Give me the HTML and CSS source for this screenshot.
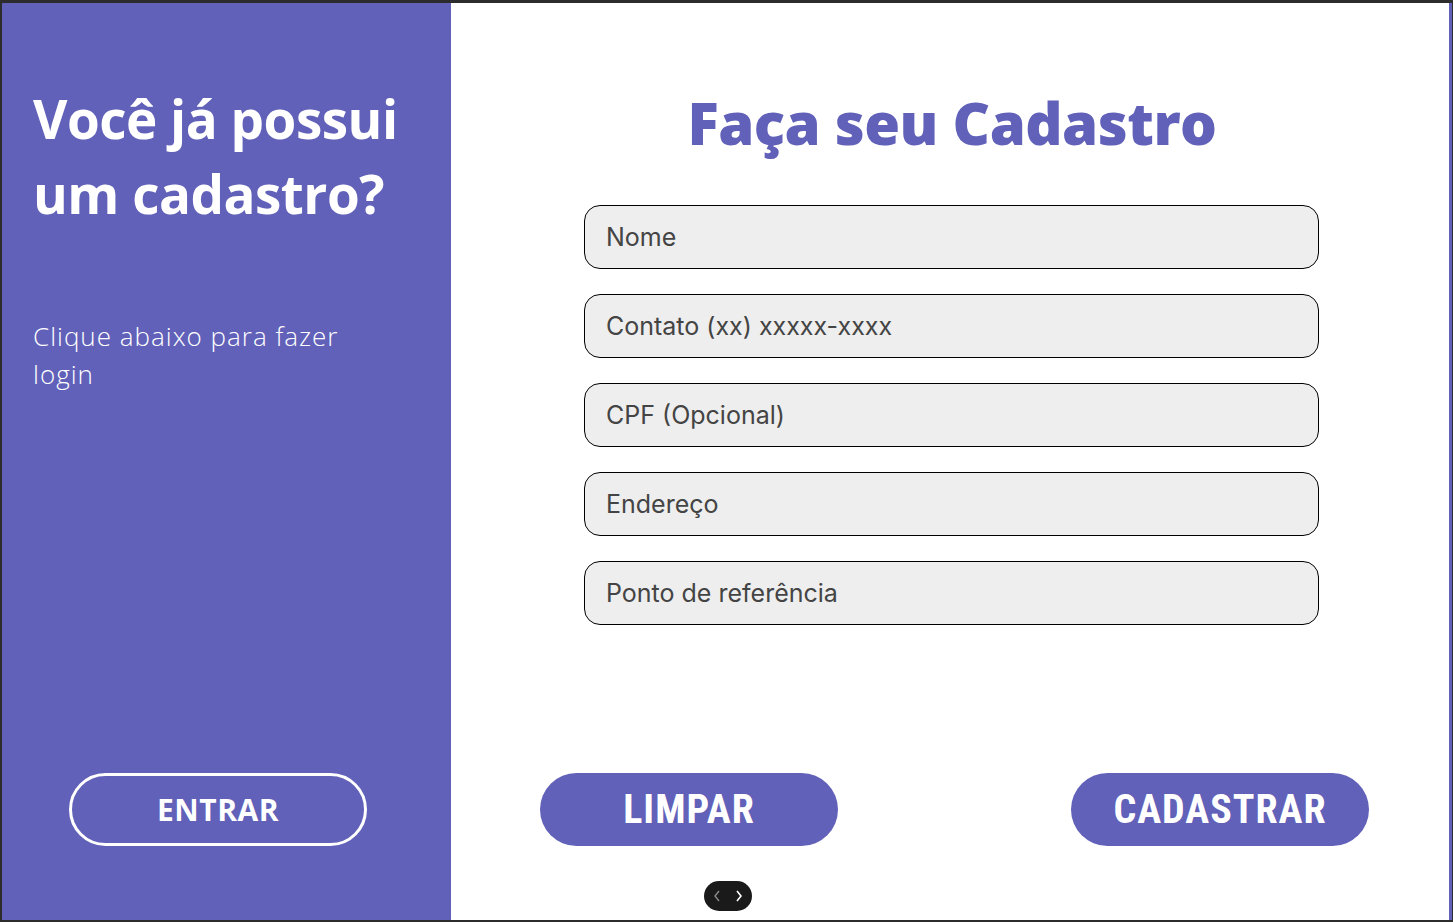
FILE: index.html
```html
<!DOCTYPE html>
<html lang="pt-BR">
<head>
<meta charset="utf-8">
<title>Cadastro</title>
<link rel="stylesheet" href="styles.css">
</head>
<body>
<div class="frame">
  <aside class="side">
    <h2 class="side-title">Você já possui<br>um cadastro?</h2>
    <p class="side-text">Clique abaixo para fazer login</p>
    <button class="btn-outline">ENTRAR</button>
  </aside>
  <main class="main">
    <h1 class="main-title">Faça seu Cadastro</h1>
    <form class="form">
      <input class="field" type="text" placeholder="Nome">
      <input class="field" type="text" placeholder="Contato (xx) xxxxx-xxxx">
      <input class="field" type="text" placeholder="CPF (Opcional)">
      <input class="field" type="text" placeholder="Endereço">
      <input class="field" type="text" placeholder="Ponto de referência">
    </form>
    <div class="actions">
      <button class="btn-fill" type="button">LIMPAR</button>
      <button class="btn-fill" type="button">CADASTRAR</button>
    </div>
    <div class="pager">
      <svg width="10" height="14" viewBox="0 0 10 14"><path d="M7 2 L3 7 L7 12" fill="none" stroke="#8a8a8a" stroke-width="1.4"/></svg>
      <svg width="10" height="14" viewBox="0 0 10 14"><path d="M3 2 L7 7 L3 12" fill="none" stroke="#ffffff" stroke-width="1.6"/></svg>
    </div>
  </main>
</div>
</body>
</html>
```
FILE: styles.css
```css
* { box-sizing: border-box; }
html, body { margin: 0; padding: 0; }
body {
  background: #2c2c2c;
  width: 1453px;
  height: 922px;
  overflow: hidden;
}
.frame {
  display: flex;
  margin: 3px 1px 0 2px;
  height: 917px;
}
.side {
  width: 449px;
  background: #6161b9;
  color: #ffffff;
  padding: 78px 0 0 31px;
  display: flex;
  flex-direction: column;
  font-family: "Open Sans", sans-serif;
}
.side-title {
  margin: 0;
  font-size: 53px;
  font-weight: 700;
  line-height: 75px;
  letter-spacing: -0.5px;
}
.side-text {
  margin: 86px 0 0 0;
  max-width: 330px;
  font-size: 26px;
  font-weight: 300;
  line-height: 38px;
  letter-spacing: 1px;
}
.btn-outline {
  margin: auto 0 74px 36px;
  width: 298px;
  height: 73px;
  border: 3px solid #ffffff;
  border-radius: 37px;
  background: transparent;
  color: #ffffff;
  font-family: "Open Sans", sans-serif;
  font-weight: 700;
  font-size: 30px;
  letter-spacing: 0.5px;
}
.main {
  flex: 1;
  background: #ffffff;
  border-right: 3px solid #6161b9;
  position: relative;
  display: flex;
  flex-direction: column;
  align-items: center;
  padding-top: 80px;
}
.main-title {
  margin: 0 0 0 4px;
  color: #6161b9;
  font-family: "Open Sans", sans-serif;
  font-weight: 800;
  font-size: 58px;
  line-height: 80px;
  letter-spacing: -0.5px;
}
.form {
  margin: 42px 0 0 3px;
  width: 735px;
  display: flex;
  flex-direction: column;
  gap: 25px;
}
.field {
  height: 64px;
  border: 1px solid #000000;
  border-radius: 16px;
  background: #eeeeee;
  padding: 0 0 0 21px;
  font-family: Inter, sans-serif;
  font-size: 25px;
  color: #333333;
  outline: none;
}
.field::placeholder { color: #444444; }
.actions {
  margin-top: auto;
  margin-bottom: 74px;
  align-self: stretch;
  padding: 0 80px 0 89px;
  display: flex;
  justify-content: space-between;
}
.btn-fill {
  width: 298px;
  height: 73px;
  border: none;
  border-radius: 37px;
  background: #6161b9;
  color: #ffffff;
  font-family: "Liberation Sans Narrow", "Roboto Condensed", Roboto, sans-serif;
  font-weight: 700;
  font-size: 40px;
  letter-spacing: 1px;
}
.pager {
  position: absolute;
  left: 253px;
  top: 878px;
  width: 48px;
  height: 30px;
  border-radius: 15px;
  background: #1a1a1a;
  display: flex;
  align-items: center;
  justify-content: center;
  gap: 12px;
}
```
